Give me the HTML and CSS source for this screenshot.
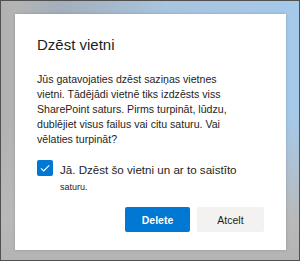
FILE: index.html
```html
<!DOCTYPE html>
<html lang="lv">
<head>
<meta charset="utf-8">
<link rel="stylesheet" href="styles.css">
</head>
<body>
<div class="frame">
  <div class="dialog">
    <h1 class="title">Dzēst vietni</h1>
    <p class="body">Jūs gatavojaties dzēst saziņas vietnes<br>vietni. Tādējādi vietnē tiks izdzēsts viss<br>SharePoint saturs. Pirms turpināt, lūdzu,<br>dublējiet visus failus vai citu saturu. Vai<br>vēlaties turpināt?</p>
    <label class="check">
      <span class="box">
        <svg viewBox="0 0 16 16" width="16" height="16"><path d="M4 8.3l2.7 2.7L12.2 5.3" fill="none" stroke="#fff" stroke-width="1.2"/></svg>
      </span>
      <span class="label">Jā. Dzēst šo vietni un ar to saistīto<br><span class="small">saturu.</span></span>
    </label>
    <div class="actions">
      <button class="btn primary">Delete</button>
      <button class="btn secondary">Atcelt</button>
    </div>
  </div>
</div>
</body>
</html>
```

FILE: styles.css
```css
html, body {
  margin: 0;
  padding: 0;
}
body {
  width: 300px;
  height: 261px;
  overflow: hidden;
  font-family: "Liberation Sans", Arial, sans-serif;
}
.frame {
  box-sizing: border-box;
  width: 300px;
  height: 261px;
  border: 1px solid #505050;
  padding: 13px 12px 10px 14px;
  background:
    linear-gradient(to bottom, rgba(180,180,180,0) 0%, rgba(180,180,180,0) 45%, #b9b9b9 85%, #b4b4b4 100%),
    linear-gradient(to right, #b1b1b1 0%, #b4b4b4 5%, #a3afbc 20%, #a8c4de 55%, #a5c9ea 100%);
}
.dialog {
  box-sizing: border-box;
  width: 271px;
  height: 236px;
  background: #fff;
  box-shadow: 0 0 3px rgba(0,0,0,0.18);
  padding: 21px 22px 18px 22px;
  display: flex;
  flex-direction: column;
  color: #252423;
}
.title {
  margin: 0;
  font-size: 15px;
  line-height: 20px;
  font-weight: normal;
  color: #201f1e;
}
.body {
  margin: 17px 0 0 0;
  font-size: 10.6px;
  line-height: 15px;
}
.check {
  margin-top: 13px;
  display: flex;
  align-items: flex-start;
  gap: 7px;
}
.box {
  width: 16px;
  height: 16px;
  border-radius: 2px;
  background: #0078d4;
  flex: none;
  display: flex;
}
.label {
  font-size: 11.6px;
  line-height: 16px;
  padding-top: 2px;
}
.small {
  font-size: 9px;
}
.actions {
  margin-top: auto;
  display: flex;
  justify-content: flex-end;
  gap: 7px;
}
.btn {
  height: 25px;
  border: none;
  border-radius: 2px;
  font-family: "Liberation Sans", Arial, sans-serif;
  font-size: 10.5px;
  padding: 0;
}
.primary {
  width: 65px;
  background: #0078d4;
  color: #fff;
  font-weight: bold;
}
.secondary {
  width: 67px;
  background: #f3f2f1;
  color: #201f1e;
}
```
